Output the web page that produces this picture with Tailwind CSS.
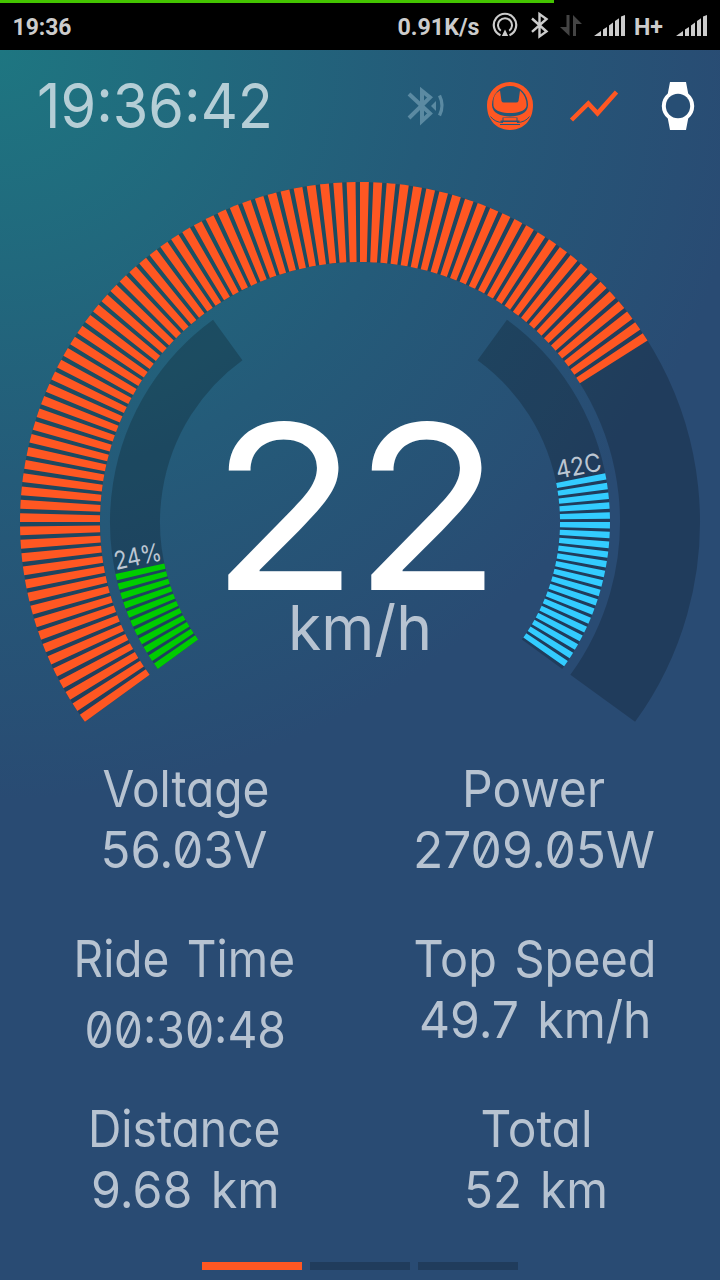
<!doctype html>
<html lang="en">
<head>
  <meta charset="utf-8">
  <meta name="viewport" content="width=device-width, initial-scale=1">
  <title>Wheel Dashboard</title>
  <script src="https://cdn.jsdelivr.net/npm/@tailwindcss/browser@4"></script>
</head>
<body class="w-[720px] h-[1280px] flex flex-col overflow-hidden bg-[#294b73] font-['Inter',sans-serif]">

<!-- Status bar -->
<header class="h-[50px] shrink-0 bg-black font-['Roboto',sans-serif] font-bold">
  <div class="h-[3px] w-[554px] bg-[#44c400]"></div>
  <div class="flex items-center justify-between h-[47px] pl-[12px] pr-[12px]">
    <svg width="62" height="47" viewBox="12 3 62 47" fill="#cccccc">
      <text x="12.500" y="34.500" textLength="59" lengthAdjust="spacingAndGlyphs" font-size="23.500">19:36</text>
    </svg>
    <svg width="314" height="47" viewBox="394 3 314 47" fill="#cccccc">
      <text x="397.500" y="34.500" textLength="82" lengthAdjust="spacingAndGlyphs" font-size="23.500">0.91K/s</text>
      <!-- Hotspot -->
      <g fill="none" stroke="#cccccc" stroke-width="2.2">
        <path d="M500.500 35.200A11.200 11.200 0 1 1 509.500 35.200" />
        <path d="M500.800 30.800A7 7 0 1 1 509.200 30.800" stroke-width="2" />
      </g>
      <path d="M505 29.500l3.200 6.500h-6.400z" />
      <!-- Bluetooth -->
      <path d="M532 18.500L546.500 31.500L539.500 36.500V14L546.500 19L532 31.800" fill="none" stroke="#cccccc" stroke-width="2.4" />
      <!-- Data arrows -->
      <path d="M566.500 15h3v21L560 27h6.500zM573 36V15l9 9h-6v12z" fill="#444444" />
      <!-- Signal strength -->
      <path id="signal" d="M594 36L601 31V36zM603 36V29.500L607 27V36zM609 36V25.500L613 22.500V36zM615 36V21L619 18.300V36zM621 36V16.500L625 15V36z" />
      <text x="634" y="34.500" textLength="29" lengthAdjust="spacingAndGlyphs" font-size="23.500">H+</text>
      <use href="#signal" x="82" />
    </svg>
  </div>
</header>

<main class="flex-1 flex flex-col bg-[radial-gradient(circle_at_0px_0px,#1e7681_0px,#245b79_430px,#294b73_750px)]">
  <!-- Clock and connection icons -->
  <div class="flex items-center justify-between h-[112px] pl-[30px] pr-[20px] shrink-0">
    <svg width="250" height="60" viewBox="30 76 250 60" fill="#b5ced6">
      <text x="37" y="128" textLength="236" lengthAdjust="spacingAndGlyphs" font-size="62">19:36:42</text>
    </svg>
    <svg width="300" height="60" viewBox="400 76 300 60">
      <!-- Bluetooth searching -->
      <g fill="none" stroke="#5b8aa2">
        <path d="M409 94L430 113.500L422 121V91L430 97.500L409 118" stroke-width="4" />
        <path d="M439.500 95.500Q444.500 105.500 439.500 115.500" stroke-width="3.300" />
      </g>
      <path d="M431 106l5-5v10z" fill="#5b8aa2" />
      <!-- Wheel -->
      <path d="M510 82A23 23 0 0 1 533 105C533 112 531 117 529.500 119C526 126 518 130 510 130S494 126 490.500 119C489 117 487 112 487 105A23 23 0 0 1 510 82z" fill="#ff5722" />
      <path d="M510 86C520 86 528 94 528 105C528 113 519 116.500 510 116.500S492 113 492 105C492 94 500 86 510 86z" fill="#245777" />
      <path d="M500 90.500L501.500 101Q502 102.500 504 102.500H516Q518 102.500 518.500 101L520 90.500Q527 97 526.500 106C525 111.500 517 113 510 113S495 111.500 493.500 106C493 97 494.500 94 500 90.500z" fill="#ff5722" />
      <path d="M490.500 116.500Q495 122.500 503 122.500M529.500 116.500Q525 122.500 517 122.500M500 124.500H520" fill="none" stroke="#245777" stroke-width="1" />
      <path d="M502.500 117.500h15v3h2v1.500h-19v-1.500h2z" fill="#245777" />
      <path d="M503.500 118h13v2.500h-13z" fill="#ff5722" />
      <!-- Graph -->
      <path d="M571.500 120L588.300 103.500L597.500 113.300L616.500 92" fill="none" stroke="#ff5722" stroke-width="4.500" />
      <!-- Watch -->
      <path d="M670 82h16l2.200 11.500a16 16 0 0 1 0 25L686 130h-16l-2.200-11.500a16 16 0 0 1 0-25z" fill="#fff" />
      <circle cx="678" cy="106" r="12.200" fill="#274e74" />
    </svg>
  </div>

  <!-- Speed gauge with battery and temperature arcs -->
  <svg class="shrink-0 block" width="720" height="578" viewBox="0 162 720 578">
    <g fill="none">
      <g stroke="#000" stroke-opacity=".2">
        <path d="M117.295 698.336A300 300 0 1 1 602.705 698.336" stroke-width="80" />
        <path d="M177.971 654.252A225 225 0 0 1 227.748 339.971" stroke-width="50" />
        <path d="M492.252 339.971A225 225 0 0 1 542.029 654.252" stroke-width="50" />
      </g>
      <path d="M117.295 698.336A300 300 0 1 1 613.720 361.920" stroke="#ff5722" stroke-width="80" pathLength="183.750" stroke-dasharray="1.500 .750" />
      <path d="M177.971 654.252A225 225 0 0 1 139.917 568.780" stroke="#00cc00" stroke-width="50" pathLength="24" stroke-dasharray="1.500 .750" />
      <path d="M580.677 478.105A225 225 0 0 1 542.029 654.252" stroke="#33ccff" stroke-width="50" pathLength="47.250" stroke-dasharray="1.500 .750" />
    </g>
    <g fill="#bcc6d2" font-size="25">
      <text transform="translate(116 570) rotate(-12)" textLength="48" lengthAdjust="spacingAndGlyphs">24%</text>
      <text transform="translate(557.500 479) rotate(-11)" textLength="46" lengthAdjust="spacingAndGlyphs">42C</text>
    </g>
    <text transform="translate(210 590) scale(1.065 1)" x="0 134.300" font-size="229" fill="#fff">22</text>
    <text x="288" y="650" textLength="144" lengthAdjust="spacingAndGlyphs" font-size="62" fill="#b7c3d1">km/h</text>
  </svg>

  <!-- Ride stats -->
  <div class="grid grid-cols-2 mt-[10px] [font-feature-settings:'zero','cv11'] [word-spacing:5px]">
    <svg width="360" height="170" font-size="51" fill="#b7c3d1">
      <text x="102.500" y="57" textLength="167" lengthAdjust="spacingAndGlyphs">Voltage</text>
      <text x="100.500" y="118" textLength="167" lengthAdjust="spacingAndGlyphs">56.03V</text>
    </svg>
    <svg width="360" height="170" font-size="51" fill="#b7c3d1">
      <text x="102" y="57" textLength="143" lengthAdjust="spacingAndGlyphs">Power</text>
      <text x="53" y="118" textLength="242" lengthAdjust="spacingAndGlyphs">2709.05W</text>
    </svg>
    <svg width="360" height="170" font-size="51" fill="#b7c3d1">
      <text x="73.500" y="57" textLength="221.500" lengthAdjust="spacingAndGlyphs">Ride Time</text>
      <text x="84.500" y="128" textLength="201.500" lengthAdjust="spacingAndGlyphs">00:30:48</text>
    </svg>
    <svg width="360" height="170" font-size="51" fill="#b7c3d1">
      <text x="53.500" y="57" textLength="243" lengthAdjust="spacingAndGlyphs">Top Speed</text>
      <text x="59" y="118" textLength="232.500" lengthAdjust="spacingAndGlyphs">49.7 km/h</text>
    </svg>
    <svg width="360" height="150" font-size="51" fill="#b7c3d1">
      <text x="88" y="57" textLength="192.500" lengthAdjust="spacingAndGlyphs">Distance</text>
      <text x="91" y="118" textLength="188.500" lengthAdjust="spacingAndGlyphs">9.68 km</text>
    </svg>
    <svg width="360" height="150" font-size="51" fill="#b7c3d1">
      <text x="120.500" y="57" textLength="112" lengthAdjust="spacingAndGlyphs">Total</text>
      <text x="104" y="118" textLength="144" lengthAdjust="spacingAndGlyphs">52 km</text>
    </svg>
  </div>

  <!-- Page indicator -->
  <div class="flex justify-center gap-2 mt-auto mb-[10px]">
    <div class="w-[100px] h-2 bg-[#ff5722]"></div>
    <div class="w-[100px] h-2 bg-black/20"></div>
    <div class="w-[100px] h-2 bg-black/20"></div>
  </div>
</main>
</body>
</html>
